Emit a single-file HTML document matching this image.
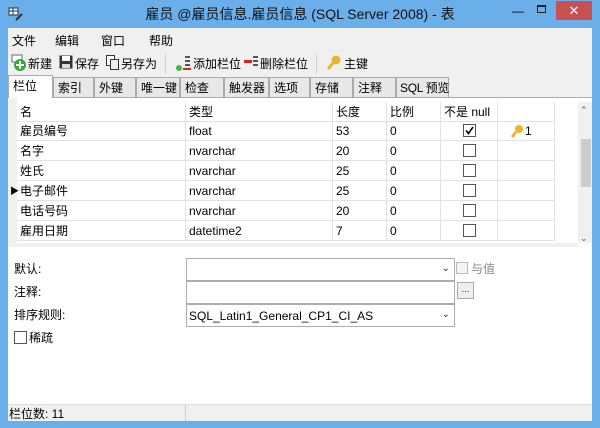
<!DOCTYPE html>
<html><head><meta charset="utf-8"><style>
*{margin:0;padding:0;box-sizing:border-box}
body{width:600px;height:428px;background:#6aaeea;font-family:"Liberation Sans","Noto Sans CJK SC",sans-serif;font-size:12px;line-height:14px;color:#000;position:relative;overflow:hidden}
.a{position:absolute;white-space:nowrap}
#c{position:absolute;left:8px;top:28px;width:584px;height:393px;background:#f0f0f0}
.tab{position:absolute;top:77px;height:20px;border:1px solid #aaa;border-bottom:none;background:#e8e8e8;padding:3px 0 0 4px;font-size:12px;white-space:nowrap;line-height:14px}
.cell{position:absolute;height:20px;border-right:1px solid #e2e2e2;border-bottom:1px solid #e2e2e2;padding:3px 0 0 3px;font-size:12px;line-height:14px;white-space:nowrap}
.cb{position:absolute;width:13px;height:13px;border:1px solid #555;background:#fff}
.box{position:absolute;border:1px solid #abadb3;background:#fff;line-height:14px}
.chev{position:absolute;right:4px;top:3px;font-size:10px;color:#333}
</style></head><body>
<svg class="a" style="left:8px;top:6px" width="16" height="16"><rect x="1" y="2" width="9" height="7" fill="#fff" stroke="#234"/><line x1="1" y1="5" x2="10" y2="5" stroke="#234"/><line x1="5" y1="2" x2="5" y2="9" stroke="#234"/><path d="M8 14 L14 8" stroke="#333" stroke-width="2"/></svg>
<div class="a" style="left:0;width:600px;top:6px;text-align:center;font-size:14px;line-height:17px;color:#111">雇员 @雇员信息.雇员信息 (SQL Server 2008) - 表</div>
<div class="a" style="left:512px;top:4px;font-size:12px">—</div>
<div class="a" style="left:537px;top:5px;width:9px;height:8px;border:1px solid #222;border-top-width:2px"></div>
<div class="a" style="left:556px;top:1px;width:36px;height:19px;background:#c75050;color:#fff;text-align:center;font-size:13px;line-height:19px">✕</div>
<div id="c"></div>
<div class="a" style="left:12px;top:34px">文件</div>
<div class="a" style="left:55px;top:34px">编辑</div>
<div class="a" style="left:101px;top:34px">窗口</div>
<div class="a" style="left:149px;top:34px">帮助</div>
<svg class="a" style="left:11px;top:54px" width="16" height="18"><rect x="1" y="1" width="10" height="7" fill="#fff" stroke="#668"/><circle cx="9" cy="11" r="6" fill="#3a3"/><path d="M9 7v8M5 11h8" stroke="#fff" stroke-width="2"/></svg>
<div class="a" style="left:28px;top:57px">新建</div>
<svg class="a" style="left:59px;top:55px" width="14" height="14"><rect x="0.5" y="0.5" width="13" height="13" fill="#333"/><rect x="3" y="1" width="8" height="5" fill="#fff"/><rect x="3" y="9" width="8" height="4" fill="#ddd"/></svg>
<div class="a" style="left:75px;top:57px">保存</div>
<svg class="a" style="left:106px;top:55px" width="14" height="15"><rect x="0.5" y="0.5" width="8" height="10" fill="#fff" stroke="#333"/><rect x="4.5" y="4.5" width="8" height="10" fill="#eee" stroke="#333"/></svg>
<div class="a" style="left:121px;top:57px">另存为</div>
<div class="a" style="left:165px;top:54px;width:1px;height:20px;background:#d0d0d0"></div>
<svg class="a" style="left:176px;top:54px" width="16" height="18"><rect x="9" y="2" width="5" height="2" fill="#555"/><rect x="9" y="6" width="5" height="2" fill="#555"/><rect x="9" y="10" width="5" height="2" fill="#555"/><rect x="7" y="14" width="8" height="2" fill="#d22"/><circle cx="3" cy="14" r="3" fill="#4b4"/></svg>
<div class="a" style="left:193px;top:57px">添加栏位</div>
<svg class="a" style="left:243px;top:54px" width="16" height="18"><rect x="10" y="2" width="5" height="2" fill="#555"/><rect x="10" y="6" width="5" height="2" fill="#555"/><rect x="10" y="10" width="5" height="2" fill="#555"/><rect x="1" y="6" width="8" height="3" fill="#d22"/></svg>
<div class="a" style="left:260px;top:57px">删除栏位</div>
<div class="a" style="left:316px;top:54px;width:1px;height:20px;background:#d0d0d0"></div>
<svg class="a" style="left:326px;top:54px" width="16" height="16"><circle cx="10" cy="6" r="4.5" fill="#e9b52c"/><path d="M7 9 L2 15" stroke="#e9b52c" stroke-width="3"/></svg>
<div class="a" style="left:344px;top:57px">主键</div>
<div class="a" style="left:8px;top:97px;width:584px;height:1px;background:#aaa"></div>
<div class="tab" style="left:53px;width:41px">索引</div>
<div class="tab" style="left:94px;width:42px">外键</div>
<div class="tab" style="left:136px;width:44px">唯一键</div>
<div class="tab" style="left:180px;width:44px">检查</div>
<div class="tab" style="left:224px;width:45px">触发器</div>
<div class="tab" style="left:269px;width:41px">选项</div>
<div class="tab" style="left:310px;width:43px">存储</div>
<div class="tab" style="left:353px;width:43px">注释</div>
<div class="tab" style="left:396px;width:53px;padding-left:3px;letter-spacing:-0.3px">SQL 预览</div>
<div class="tab" style="left:8px;top:75px;width:45px;height:23px;background:#fff">栏位</div>
<div class="a" style="left:8px;top:98px;width:584px;height:307px;background:#fff"></div>
<div class="a" style="left:8px;top:98px;width:9px;height:145px;background:#f0f0f0"></div>
<div class="a" style="left:17px;top:102px;width:538px;height:141px;background:#fff"></div>
<div id="g"></div>
<div class="a" style="left:578px;top:102px;width:14px;height:141px;background:#f0f0f0"></div>
<div class="a" style="left:581px;top:139px;width:10px;height:48px;background:#cdcdcd"></div>
<div class="a" style="left:580px;top:103px;font-size:9px;color:#555">⌃</div>
<div class="a" style="left:580px;top:231px;font-size:9px;color:#555">⌄</div>
<div class="a" style="left:10px;top:184px;font-size:9px">▶</div>
<div class="a" style="left:8px;top:243px;width:570px;height:4px;background:#f0f0f0"></div>
<div class="a" style="left:14px;top:262px">默认:</div>
<div class="box" style="left:186px;top:258px;width:269px;height:23px"><span class="chev">⌄</span></div>
<div class="a" style="left:456px;top:262px;width:12px;height:12px;border:1px solid #bbb;background:#f4f4f4"></div>
<div class="a" style="left:471px;top:262px;color:#888">与值</div>
<div class="a" style="left:14px;top:285px">注释:</div>
<div class="box" style="left:186px;top:281px;width:269px;height:23px"></div>
<div class="a" style="left:457px;top:282px;width:17px;height:17px;border:1px solid #aaa;background:#eee;font-size:9px;text-align:center;line-height:13px">...</div>
<div class="a" style="left:14px;top:308px">排序规则:</div>
<div class="box" style="left:186px;top:304px;width:269px;height:23px;padding:4px 0 0 2px">SQL_Latin1_General_CP1_CI_AS<span class="chev">⌄</span></div>
<div class="cb" style="left:14px;top:331px"></div>
<div class="a" style="left:29px;top:331px">稀疏</div>
<div class="a" style="left:8px;top:404px;width:584px;height:17px;background:#f0f0f0;border-top:1px solid #ddd"></div>
<div class="a" style="left:185px;top:405px;width:1px;height:16px;background:#ccc"></div>
<div class="a" style="left:9px;top:407px">栏位数: 11</div>
<script>
var cols=[17,186,333,387,441,498,555];
var rows=[["名","类型","长度","比例","不是 null",""],["雇员编号","float","53","0","c1","k"],["名字","nvarchar","20","0","c",""],["姓氏","nvarchar","25","0","c",""],["电子邮件","nvarchar","25","0","c",""],["电话号码","nvarchar","20","0","c",""],["雇用日期","datetime2","7","0","c",""]];
var h="";
rows.forEach(function(r,i){var y=i==0?102:103+i*20-2;
for(var j=0;j<6;j++){var t=r[j];var inner=t;
if(t=="c"||t=="c1"){inner='<div class="cb" style="left:22px;top:3px">'+(t=="c1"?'<svg width="11" height="11" style="position:absolute;left:0;top:0"><path d="M2 5.5 L4.5 8.5 L9 2" stroke="#000" stroke-width="1.6" fill="none"/></svg>':'')+'</div>';}
if(t=="k"){inner='<svg width="14" height="14" style="position:absolute;left:12px;top:3px"><circle cx="9" cy="5" r="4" fill="#e9b52c"/><path d="M6 8 L2 13" stroke="#e9b52c" stroke-width="3"/></svg><span style="position:absolute;left:27px;top:3px">1</span>';}
h+='<div class="cell" style="left:'+cols[j]+'px;top:'+y+'px;width:'+(cols[j+1]-cols[j])+'px">'+inner+'</div>';}});
document.getElementById("g").innerHTML=h;
</script>
</body></html>
